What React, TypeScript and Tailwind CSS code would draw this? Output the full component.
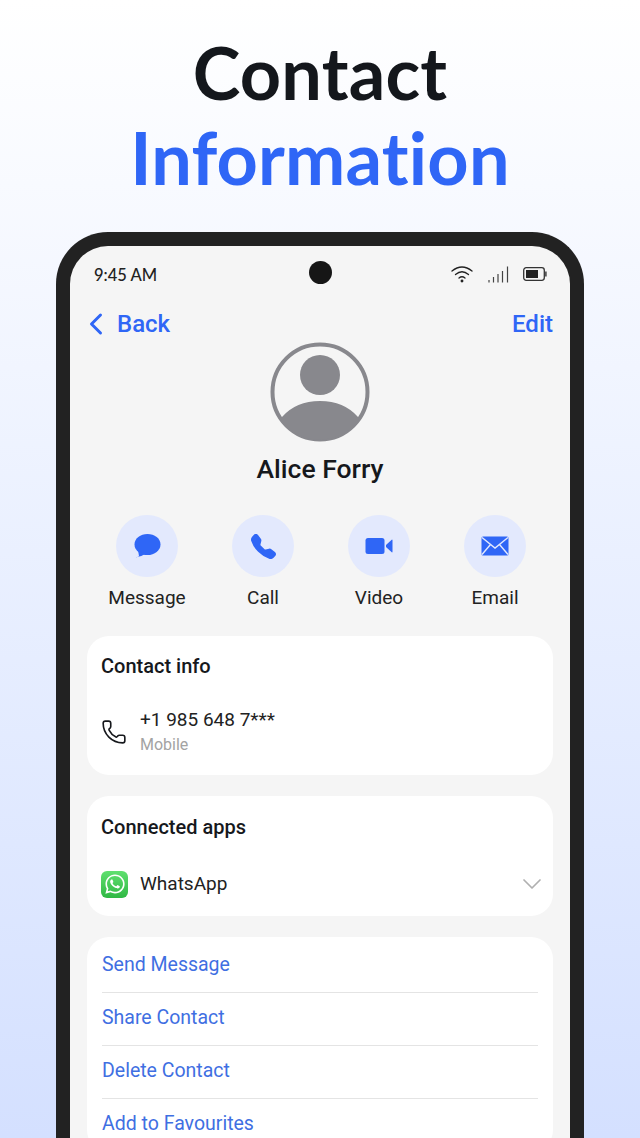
import { ChevronDown, ChevronLeft, Phone } from "lucide-react"
import { BsTelephoneFill } from "react-icons/bs"
import { FaWhatsapp } from "react-icons/fa"

const MessageIcon = () => (
    <svg width="28" height="26" viewBox="0 0 28 26" fill="#2f66f6">
        <ellipse cx="14.5" cy="11.5" rx="13" ry="10.5" />
        <path d="M5 17 L6 23 Q4.5 24.5 3 24 Q7 24.5 12 21 Z" />
    </svg>
)

const VideoIcon = () => (
    <svg width="28" height="18" viewBox="0 0 28 18" fill="#2f66f6">
        <rect x="0.5" y="1" width="19" height="16" rx="2.5" />
        <path d="M21 8 L27 2.5 Q27.5 2.5 27.5 3.5 V14.5 Q27.5 15.5 27 15.5 L21 10 Z" />
    </svg>
)

const MailIcon = () => (
    <svg width="28" height="20" viewBox="0 0 28 20">
        <rect x="0.5" y="0.5" width="27" height="19" rx="1.5" fill="#2f66f6" />
        <path d="M1 1.5 L14 12 L27 1.5 M1 18.5 L9.5 8.5 M27 18.5 L18.5 8.5" fill="none" stroke="#e3e9fd" strokeWidth="1.4" />
    </svg>
)

const actions = [
    { label: "Message", icon: <MessageIcon /> },
    { label: "Call", icon: <BsTelephoneFill size={25} color="#2f66f6" /> },
    { label: "Video", icon: <VideoIcon /> },
    { label: "Email", icon: <MailIcon /> },
]

const links = ["Send Message", "Share Contact", "Delete Contact", "Add to Favourites"]

export default function App() {
    return (
        <div className="h-[1138px] w-[640px] overflow-hidden bg-gradient-to-b from-white to-[#d4e0ff] font-['Roboto',sans-serif] text-[#16181c]">
            {/* Heading */}
            <div className="flex h-[232px] flex-col items-center pt-[30px] font-['Lato',sans-serif] text-[72px] leading-[85px] font-bold tracking-[0.2px] [font-variant-ligatures:none]">
                <div className="text-[#14171c]">Contact</div>
                <div className="text-[#2f66f6]">Information</div>
            </div>

            {/* Phone */}
            <div className="mx-[56px] h-[906px] rounded-t-[52px] border-[14px] border-b-0 border-[#222222] bg-[#f5f5f5]">
                {/* Status bar */}
                <div className="flex h-[56px] items-center justify-between pr-[23px] pl-[24px]">
                    <span className="mt-[2px] font-['Lato',sans-serif] text-[16.5px] font-medium text-[#222]">9:45 AM</span>
                    <div className="flex items-center gap-[14px]">
                        <svg width="24" height="18" viewBox="0 0 24 18" fill="none" stroke="#222" strokeWidth="1.3" strokeLinecap="round">
                            <path d="M2 6 Q12 -2 22 6" />
                            <path d="M5.5 9.5 Q12 4 18.5 9.5" />
                            <path d="M9 13 Q12 10.5 15 13" />
                            <circle cx="12" cy="16" r="0.8" fill="#222" />
                        </svg>
                        <svg width="21" height="17" viewBox="0 0 21 17" stroke="#444" strokeWidth="1.2">
                            <path d="M1 16.5 V14 M5.5 16.5 V11 M10 16.5 V8 M14.5 16.5 V5 M19.5 16.5 V0.5" />
                        </svg>
                        <svg width="24" height="14" viewBox="0 0 24 14">
                            <rect x="0.7" y="0.7" width="20.6" height="12.6" rx="2.5" fill="none" stroke="#333" strokeWidth="1.3" />
                            <rect x="3" y="3" width="12" height="8" fill="#222" />
                            <rect x="22.2" y="4.5" width="1.4" height="5" fill="#333" />
                        </svg>
                    </div>
                </div>
                {/* camera */}
                <div className="absolute top-[261px] left-[308.5px] h-[23px] w-[23px] rounded-full bg-[#161616]" />

                {/* Nav */}
                <div className="flex h-[44px] items-center justify-between pr-[17px] pl-[8px] text-[24px] font-medium text-[#2f66f6]">
                    <div className="flex items-center gap-[3px]">
                        <ChevronLeft size={36} strokeWidth={2} />
                        <span>Back</span>
                    </div>
                    <span>Edit</span>
                </div>

                {/* Avatar */}
                <div className="flex flex-col items-center">
                    <svg width="100" height="100" viewBox="0 0 100 100" className="-mt-[4px]">
                        <circle cx="50" cy="50" r="47.5" fill="none" stroke="#88888d" strokeWidth="4" />
                        <circle cx="50" cy="33" r="20" fill="#88888d" />
                        <path d="M12 75 Q26 59 50 59 Q74 59 88 75 L90.4 75 A47.5 47.5 0 0 1 9.6 75 Z" fill="#88888d" />
                    </svg>
                    <div className="mt-[9px] text-[26.5px] leading-[36px] font-medium">Alice Forry</div>
                </div>

                {/* Actions */}
                <div className="mt-[28px] mr-[17px] ml-[19px] grid grid-cols-4">
                    {actions.map((action) => (
                        <div key={action.label} className="flex flex-col items-center">
                            <div className="flex h-[62px] w-[62px] items-center justify-center rounded-full bg-[#e3e9fd]">{action.icon}</div>
                            <div className="mt-[9px] text-[19px] leading-[24px] text-[#222]">{action.label}</div>
                        </div>
                    ))}
                </div>

                {/* Cards */}
                <div className="mt-[26px] flex flex-col gap-[21px] px-[17px]">
                    <div className="h-[139px] rounded-[22px] bg-white px-[14px] pt-[16px]">
                        <div className="text-[20px] leading-[28px] font-medium">Contact info</div>
                        <div className="mt-[27px] flex items-center gap-[13px]">
                            <Phone size={26} strokeWidth={1.5} className="shrink-0" />
                            <div>
                                <div className="text-[19px] leading-[26px] text-[#222]">+1 985 648 7***</div>
                                <div className="mt-[1px] text-[16px] leading-[22px] text-[#a3a3a3]">Mobile</div>
                            </div>
                        </div>
                    </div>

                    <div className="h-[120px] rounded-[22px] bg-white px-[14px] pt-[17px]">
                        <div className="text-[20px] leading-[28px] font-medium">Connected apps</div>
                        <div className="mt-[27px] flex items-center gap-[12px]">
                            <div className="flex h-[27px] w-[27px] items-center justify-center rounded-[6px] bg-gradient-to-b from-[#5fe06f] to-[#2fb844]">
                                <FaWhatsapp size={22} color="#fff" />
                            </div>
                            <span className="flex-1 text-[19px] leading-[28px] text-[#222]">WhatsApp</span>
                            <ChevronDown size={32} strokeWidth={1.3} className="-mr-[9px] text-[#b0b0b0]" />
                        </div>
                    </div>

                    <div className="rounded-[22px] bg-white px-[15px] pt-[3px]">
                        {links.map((link, i) => (
                            <div key={link} className={i < 3 ? "h-[53px] border-b border-[#e4e4e4]" : "h-[53px]"}>
                                <div className="pt-[11px] text-[19.5px] leading-[28px] text-[#3f6fe2]">{link}</div>
                            </div>
                        ))}
                    </div>
                </div>
            </div>
        </div>
    )
}
